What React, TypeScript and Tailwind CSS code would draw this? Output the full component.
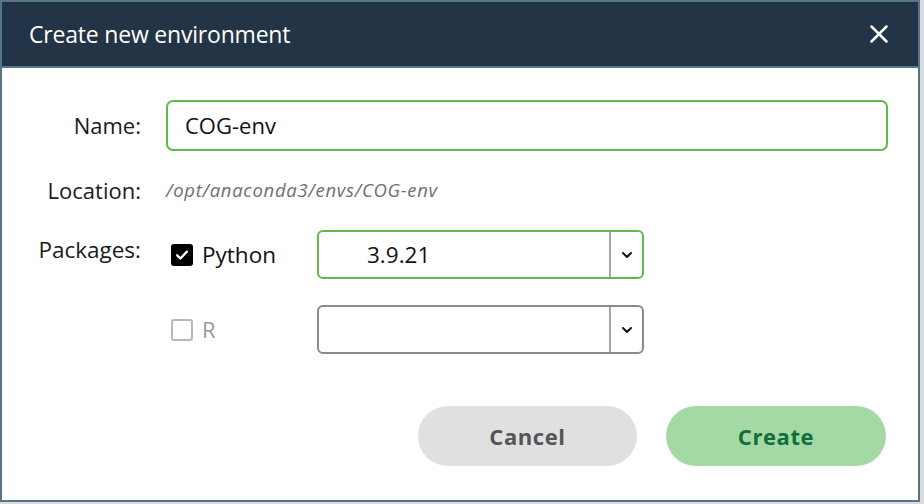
import { X } from "lucide-react";

const font = { fontFamily: '"Open Sans", "Noto Sans", sans-serif' };

function Chevron() {
  return (
    <svg viewBox="0 0 12 8" className="h-[8px] w-[12px]" fill="none" stroke="#111" strokeWidth="2" strokeLinecap="round" strokeLinejoin="round">
      <path d="M2 2l4 4 4-4" />
    </svg>
  );
}

function Select({ value, active }: { value?: string; active?: boolean }) {
  return (
    <div
      className={`flex h-[49px] w-[327px] items-stretch rounded-[6px] border-2 ${
        active ? "border-[#62b84a]" : "border-[#8a8a8a]"
      }`}
    >
      <div className="flex flex-1 items-center pl-[48px] text-[22.5px] text-[#111]">{value}</div>
      <div className="w-[2px] bg-[#a6a6a6]" />
      <div className="flex w-[31px] items-center justify-center">
        <Chevron />
      </div>
    </div>
  );
}

export default function App() {
  return (
    <div className="relative h-[504px] w-[924px] overflow-hidden bg-[#d9dcdf]" style={font}>
      <div className="flex h-[502px] w-[920px] flex-col border-2 border-[#557588] bg-white">
        <div className="flex h-[66px] shrink-0 items-center justify-between border-b-2 border-[#557588] bg-[#243447] pl-[27px] pr-[24px]">
          <span className="text-[23px] tracking-[-0.2px] text-white">Create new environment</span>
          <X className="h-[30px] w-[30px] text-white" strokeWidth={2} />
        </div>

        <div className="flex flex-col pt-[32px]">
          <div className="flex h-[51px] items-center">
            <div className="w-[139px] text-right text-[22px] text-[#1a1a1a]">Name:</div>
            <div className="ml-[25px] flex h-[51px] w-[722px] items-center rounded-[7px] border-2 border-[#62b84a] pl-[17px] text-[22px] text-[#111]">
              COG-env
            </div>
          </div>

          <div className="mt-[19px] flex h-[40px] items-center">
            <div className="w-[139px] text-right text-[22px] text-[#1a1a1a]">Location:</div>
            <div className="ml-[25px] text-[18.5px] tracking-[0.7px] italic text-[#6f6f6f]">/opt/anaconda3/envs/COG-env</div>
          </div>

          <div className="mt-[20px] flex h-[49px] items-center">
            <div className="w-[139px] self-start pt-[3px] text-right text-[22.5px] text-[#1a1a1a]">Packages:</div>
            <div className="ml-[30px] flex w-[146px] items-center">
              <div className="flex h-[22px] w-[22px] items-center justify-center rounded-[3px] bg-black">
                <svg viewBox="0 0 16 16" className="h-[16px] w-[16px]" fill="none" stroke="white" strokeWidth="2.4" strokeLinecap="round" strokeLinejoin="round">
                  <path d="M3.2 8.3l3.2 3.2 6.4-6.8" />
                </svg>
              </div>
              <span className="ml-[9px] text-[22.5px] text-[#111]">Python</span>
            </div>
            <Select value="3.9.21" active />
          </div>

          <div className="mt-[26px] flex h-[49px] items-center">
            <div className="w-[139px]" />
            <div className="ml-[30px] flex w-[146px] items-center">
              <div className="h-[22px] w-[22px] rounded-[3px] border-2 border-[#b8b8b8]" />
              <span className="ml-[9px] text-[22px] text-[#9a9a9a]">R</span>
            </div>
            <Select />
          </div>

          <div className="mt-[52px] flex justify-end gap-[29px] pr-[32px]">
            <button className="flex h-[60px] w-[219px] items-center justify-center rounded-full bg-[#e0e0e0] text-[22px] font-bold tracking-[0.6px] text-[#555]">
              Cancel
            </button>
            <button className="flex h-[60px] w-[220px] items-center justify-center rounded-full bg-[#a4d9a5] text-[22px] font-bold tracking-[0.6px] text-[#0f6e3a]">
              Create
            </button>
          </div>
        </div>
      </div>
    </div>
  );
}
